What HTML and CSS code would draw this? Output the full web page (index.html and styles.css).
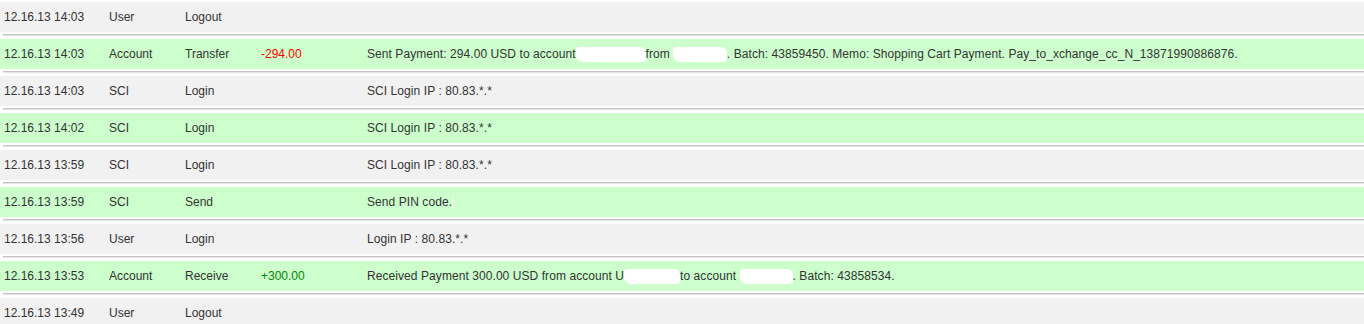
FILE: index.html
```html
<!DOCTYPE html>
<html>
<head>
<meta charset="utf-8">
<link rel="stylesheet" href="styles.css">
</head>
<body>
<div class="log">
  <div class="row gray"><span>12.16.13 14:03</span><span>User</span><span>Logout</span><span></span><span></span></div>
  <div class="sep"></div>
  <div class="row green"><span>12.16.13 14:03</span><span>Account</span><span>Transfer</span><span class="neg">-294.00</span><span class="desc">Sent Payment: 294.00 USD to account<i class="blot b1"></i>from<i class="blot b2"></i>. Batch: 43859450. Memo: Shopping Cart Payment. Pay_to_xchange_cc_N_13871990886876.</span></div>
  <div class="sep"></div>
  <div class="row gray"><span>12.16.13 14:03</span><span>SCI</span><span>Login</span><span></span><span class="desc">SCI Login IP : 80.83.*.*</span></div>
  <div class="sep"></div>
  <div class="row green"><span>12.16.13 14:02</span><span>SCI</span><span>Login</span><span></span><span class="desc">SCI Login IP : 80.83.*.*</span></div>
  <div class="sep"></div>
  <div class="row gray"><span>12.16.13 13:59</span><span>SCI</span><span>Login</span><span></span><span class="desc">SCI Login IP : 80.83.*.*</span></div>
  <div class="sep"></div>
  <div class="row green"><span>12.16.13 13:59</span><span>SCI</span><span>Send</span><span></span><span class="desc">Send PIN code.<i class="blot b5"></i></span></div>
  <div class="sep"></div>
  <div class="row gray"><span>12.16.13 13:56</span><span>User</span><span>Login</span><span></span><span class="desc">Login IP : 80.83.*.*</span></div>
  <div class="sep"></div>
  <div class="row green"><span>12.16.13 13:53</span><span>Account</span><span>Receive</span><span class="pos">+300.00</span><span class="desc">Received Payment 300.00 USD from account U<i class="blot b3"></i>to account <i class="blot b4"></i>. Batch: 43858534.</span></div>
  <div class="sep"></div>
  <div class="row gray"><span>12.16.13 13:49</span><span>User</span><span>Logout</span><span></span><span></span></div>
</div>
</body>
</html>
```

FILE: styles.css
```css
html, body {
  margin: 0;
  padding: 0;
  background: #ffffff;
}

.log {
  padding-top: 2px;
  font-family: "Liberation Sans", Arial, sans-serif;
  font-size: 12px;
  color: #333333;
}

.row {
  display: grid;
  grid-template-columns: 105px 76px 76px 106px 1fr;
  height: 30px;
  line-height: 30px;
  padding-left: 4px;
  white-space: nowrap;
}

.desc {
  letter-spacing: 0.07px;
}

.gray {
  background: #f1f1f1;
}

.green {
  background: #ccffcc;
}

.sep {
  margin: 2px 0 3px 3px;
  height: 1px;
  border-top: 1px solid #c4c4c4;
  background: #e4e4e4;
}

.neg {
  color: #ff0000;
}

.pos {
  color: #008800;
}

.blot {
  display: inline-block;
  background: #ffffff;
  height: 15px;
  vertical-align: -4px;
  border-radius: 3px 6px 4px 7px;
}

.b1 {
  width: 70px;
}

.b2 {
  width: 54px;
  margin-left: 3px;
}

.b3 {
  width: 56px;
}

.b4 {
  width: 53px;
}

.b5 {
  width: 2px;
  background: #e8f8e8;
}
```
